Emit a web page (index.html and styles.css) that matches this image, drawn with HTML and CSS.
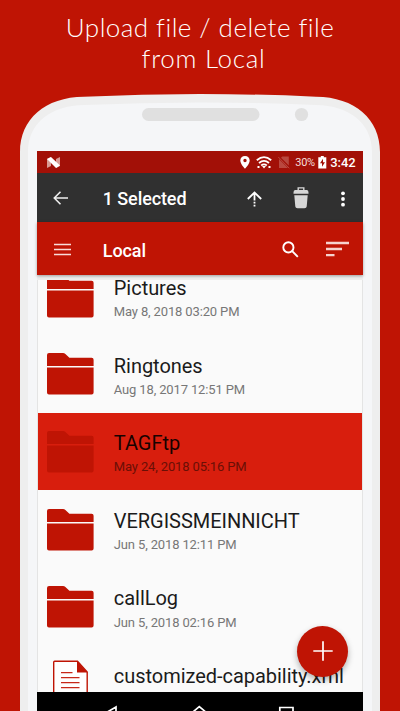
FILE: index.html
```html
<!DOCTYPE html>
<html lang="en">
<head>
<meta charset="utf-8">
<title>Local files</title>
<link rel="stylesheet" href="styles.css">
</head>
<body>
<svg class="defs" width="0" height="0">
  <symbol id="folder" viewBox="0 0 47 42">
    <path d="M0 13.1V2Q0 0 2 0H16Q17.4 0 18.4 1L22.4 4.8H44.6Q46.6 4.8 46.6 6.8V13.1ZM0 14.4H46.6V39.5Q46.6 41.6 44.6 41.6H2Q0 41.6 0 39.5Z"/>
  </symbol>
</svg>
<h1 class="headline"><span class="line-one">Upload file / delete file</span><span class="line-two">from Local</span></h1>
<div class="phone">
  <svg class="shell" viewBox="0 0 360 617" width="360" height="617">
    <path fill="#eee" d="M0 617V58C0 25 25 3 64 2.7Q122 0 180 0T296 2.7C335 3 360 25 360 58V617Z"/>
    <path fill="#f5f6f8" d="M8 617V58C8 29 31 11.500 64 11Q122 8.400 180 8.400T296 11C329 11.500 352 29 352 58V617Z"/>
    <rect x="122" y="14" width="117.500" height="13" rx="6.500" fill="#e0e0e0"/>
    <circle cx="281.500" cy="20.500" r="6.600" fill="#e0e0e0"/>
  </svg>
  <main class="screen">
    <div class="statusbar">
      <svg class="nougat" viewBox="0 0 14 11" width="14" height="11"><path fill="#d99b95" d="M0 2L4 0V9L0 11ZM9 2L13 0V9L9 11Z"/><path fill="#fff" d="M0 2L4 0L13 8.500L9 11Z"/></svg>
      <svg class="pin" viewBox="0 0 10 13" width="10" height="13"><path fill="#fff" fill-rule="evenodd" d="M5 0C2.200 0 .3 2 .3 4.500C.3 8 5 12.700 5 12.700S9.700 8 9.700 4.500C9.700 2 7.800 0 5 0ZM5 2.800A1.700 1.700 0 1 1 5 6.200A1.700 1.700 0 1 1 5 2.800Z"/></svg>
      <svg class="wifi" viewBox="0 0 16 13" width="16" height="13"><g fill="none" stroke="#fff" stroke-width="1.800"><path d="M.8 4.200Q8 -2 15.200 4.200M3 7Q8 2.800 13 7M5.200 9.500Q8 7.200 10.800 9.500"/></g><path fill="#fff" d="M6 10H10L8 12.500ZM1.500 10H3.500V12H1.500ZM12.500 10H14.500V12H12.500Z"/></svg>
      <svg class="nosim" viewBox="0 0 12 13" width="12" height="13"><path fill="#b9483f" d="M4.200 .5H10.800V9.500L3 1.700ZM1 3L10 12H1Z"/><path stroke="#b9483f" d="M.3 1L11.300 12.300"/></svg>
      <span class="percent">30%</span>
      <svg class="battery" viewBox="0 0 9 13" width="9" height="13"><path fill="#fff" d="M2.800 0H5.800V1.300H8.300V12.500H.3V1.300H2.800Z"/><path fill="#a21007" d="M5 2.800L2 7.300H4V10.800L7 6.200H5Z"/></svg>
      <span class="clock">3:42</span>
    </div>
    <div class="actionbar">
      <svg class="back" viewBox="0 0 16 14" width="16" height="14"><path fill="none" stroke="#eee" stroke-width="1.600" d="M15 7H1.500M7.500 .7L1.300 7L7.500 13.300"/></svg>
      <span class="bar-title">1 Selected</span>
      <svg class="up" viewBox="0 0 15 16" width="15" height="16"><path fill="none" stroke="#fff" stroke-width="1.800" d="M.8 8L7.500 1.500L14.200 8M7.500 1.500V9.500M7.500 10.800V12.400M7.500 13.800V15.400"/></svg>
      <svg class="trash" viewBox="0 0 16 22" width="16" height="22"><path fill="none" stroke="#d6d6d6" stroke-width="1.400" d="M5.200 3.400V.9H10.800V3.400"/><path fill="#d6d6d6" d="M2 3H14Q15.500 3 15.500 5.500V6.800H.5V5.500Q.5 3 2 3ZM1.300 8.200H14.700L13.700 19.500Q13.500 21.300 11.500 21.300H4.500Q2.500 21.300 2.300 19.500Z"/></svg>
      <svg class="more" viewBox="0 0 4 16" width="4" height="16"><g fill="#fff"><circle cx="2" cy="2.300" r="1.900"/><circle cx="2" cy="8" r="1.900"/><circle cx="2" cy="13.700" r="1.900"/></g></svg>
    </div>
    <div class="toolbar">
      <svg class="menu" viewBox="0 0 17 13" width="17" height="13"><path stroke="#f9dcd9" stroke-width="1.700" d="M0 1.500H17M0 6.500H17M0 11.500H17"/></svg>
      <span class="bar-title">Local</span>
      <svg class="search" viewBox="0 0 17 17" width="17" height="17"><g fill="none" stroke="#fff" stroke-width="1.900"><circle cx="6.400" cy="6.400" r="5.100"/><path d="M10.200 10.200L15.800 15.800"/></g></svg>
      <svg class="sort" viewBox="0 0 23 16" width="23" height="16"><path stroke="#f6d2ce" stroke-width="2.300" d="M0 2H23M0 8H16M0 14.100H8.500"/></svg>
    </div>
    <div class="files">
      <ul class="list">
        <li class="row"><svg class="icon"><use href="#folder"/></svg><div class="info"><b class="name">Pictures</b><span class="date">May 8, 2018 03:20 PM</span></div></li>
        <li class="row"><svg class="icon"><use href="#folder"/></svg><div class="info"><b class="name">Ringtones</b><span class="date">Aug 18, 2017 12:51 PM</span></div></li>
        <li class="row selected"><svg class="icon"><use href="#folder"/></svg><div class="info"><b class="name">TAGFtp</b><span class="date">May 24, 2018 05:16 PM</span></div></li>
        <li class="row"><svg class="icon"><use href="#folder"/></svg><div class="info"><b class="name">VERGISSMEINNICHT</b><span class="date">Jun 5, 2018 12:11 PM</span></div></li>
        <li class="row"><svg class="icon"><use href="#folder"/></svg><div class="info"><b class="name">callLog</b><span class="date">Jun 5, 2018 02:16 PM</span></div></li>
        <li class="row"><svg class="icon doc" viewBox="0 0 47 42"><path fill="#fff" stroke="#bf1404" stroke-width="1.400" d="M6.700 42V-1.700Q6.700 -2.700 7.700 -2.700H30.500L40.200 8V42"/><path fill="#bf1404" d="M30 -3L40.600 8.500H30Z"/><path stroke="#c7281a" stroke-width="1.300" d="M14 8.700H25.500M14 13.700H32.500M14 18.700H32.500M14 23.700H32.500"/></svg><div class="info"><b class="name">customized-capability.xml</b></div></li>
      </ul>
    </div>
    <nav class="navbar">
      <svg viewBox="0 0 325 20" width="325" height="20"><g fill="none" stroke="#fff" stroke-width="1.700"><path d="M79 15L66 22.500L79 30Z"/><path d="M153 25V22.500L162.300 14.500L171.600 22.500V25"/><path d="M242.800 26V15.500H256V26"/></g></svg>
    </nav>
    <button class="fab" aria-label="Add"><svg viewBox="0 0 20 20" width="20" height="20"><path stroke="#fff" stroke-width="1.700" d="M10 .3V19.700M.3 10H19.700"/></svg></button>
  </main>
</div>
</body>
</html>
```
FILE: styles.css
```css
* { box-sizing: border-box; }
body {
  margin: 0;
  width: 400px;
  height: 711px;
  overflow: hidden;
  background: #bf1404;
  font-family: Roboto, "Liberation Sans", sans-serif;
}
svg { display: block; flex: none; }
.defs { position: absolute; }
.headline {
  margin: 0;
  height: 94px;
  padding-top: 12px;
  color: #fff;
  font: 300 26px/31px Lato, sans-serif;
  text-align: center;
  white-space: nowrap;
}
.headline span { display: block; }
.line-one { letter-spacing: .45px; }
.line-two { padding-left: 7px; letter-spacing: .7px; }
.phone {
  position: relative;
  width: 360px;
  height: 617px;
  margin: 0 auto;
  padding: 57px 17.500px 0 17.300px;
}
.shell { position: absolute; top: 0; left: 0; }
.screen {
  position: relative;
  height: 560px;
  display: flex;
  flex-direction: column;
  background: #fafafa;
}
.statusbar {
  height: 21.700px;
  flex: none;
  display: flex;
  align-items: center;
  padding-top: 1px;
  background: #a21007;
  color: #fff;
}
.nougat { margin: 0 179px 0 10px; }
.wifi { margin-left: 6px; }
.nosim { margin-left: 6px; }
.percent { margin-left: 5px; width: 22px; font-size: 11px; letter-spacing: -.3px; color: #f4dedb; }
.battery { margin-left: 1px; }
.clock { margin-left: 3px; font-size: 13px; font-weight: 500; letter-spacing: -.1px; }
.actionbar, .toolbar {
  flex: none;
  display: flex;
  align-items: center;
  color: #fff;
}
.actionbar { height: 49.300px; background: #303030; }
.toolbar {
  height: 53px;
  padding-top: 2px;
  background: #bf1404;
  box-shadow: 0 1px 3px rgba(0, 0, 0, .35);
  z-index: 1;
}
.bar-title { font-size: 18px; font-weight: 500; line-height: 22px; letter-spacing: -.1px; }
.back { margin: 2px 33.500px 0 16px; }
.actionbar .bar-title { width: 144.300px; padding-top: 4px; }
.up { margin-top: 3px; }
.trash { margin: 2px 0 0 31px; }
.more { margin: 3px 0 0 32px; }
.menu { margin: 0 32px 0 16.500px; }
.toolbar .bar-title { width: 179px; padding-top: 3px; }
.sort { margin-left: 27px; }
.files {
  height: 417px;
  flex: none;
  padding-top: 5px;
  background: #eee;
}
.list {
  height: 412px;
  margin: 0;
  padding: 0;
  overflow: hidden;
  display: flex;
  flex-direction: column;
  background: #fafafa;
  border: solid #e4e4e4;
  border-width: 0 .8px;
  list-style: none;
}
.row {
  height: 77.600px;
  flex: none;
  display: flex;
  padding-left: 9px;
}
.row:first-child { margin-top: -22.400px; }
.icon { width: 47px; height: 42px; margin-top: 18.200px; fill: #bf1404; }
.doc { overflow: visible; }
.info { display: flex; flex-direction: column; padding: 18.400px 0 0 19.500px; }
.name { font-size: 20px; line-height: 24px; font-weight: 400; letter-spacing: -.04px; color: #1b1b1b; white-space: nowrap; }
.date { margin-top: 4.300px; font-size: 13px; line-height: 16px; letter-spacing: -.14px; color: #777; white-space: nowrap; }
.selected { margin: 0 -1px; padding-left: 10px; background: #d81e0d; }
.selected .name { color: #180200; }
.selected .date { color: #6a0f06; }
.navbar { height: 20px; flex: none; background: #000; }
.fab {
  position: absolute;
  left: 260px;
  top: 474.500px;
  width: 51px;
  height: 51px;
  padding: 0;
  border: 0;
  border-radius: 50%;
  display: grid;
  place-items: center;
  background: #bf1404;
  box-shadow: 0 3px 6px rgba(0, 0, 0, .3);
}
```
